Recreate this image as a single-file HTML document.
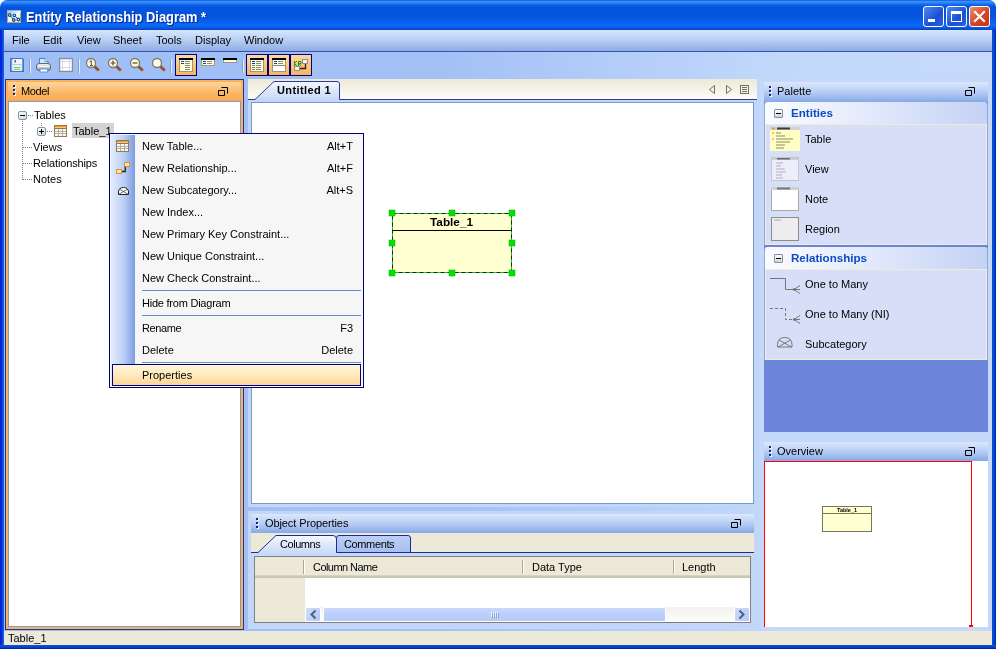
<!DOCTYPE html>
<html><head><meta charset="utf-8"><title>Entity Relationship Diagram</title>
<style>
html,body{margin:0;padding:0;}
body{width:996px;height:649px;overflow:hidden;position:relative;background:linear-gradient(90deg,#9ebef5 0,#a4c1f6 45%,#c2d8fb 78%,#c5dafb 100%);font-family:"Liberation Sans",sans-serif;font-size:11px;color:#000;}
.a{position:absolute;}
.t{position:absolute;white-space:nowrap;line-height:13px;}
svg{position:absolute;overflow:visible;}
#title{left:0;top:0;width:996px;height:30px;background:linear-gradient(#0a58e0 0,#3a90fc 1.500px,#2a82f6 3px,#0c62ea 5px,#0455de 7px,#0454dc 16px,#0860ee 22px,#0a68f8 25px,#0a60ec 27px,#0a52d6 28.500px,#0840bc 30px);border-radius:7px 7px 0 0;}
#title .tt{left:26px;top:9px;font-size:14.5px;font-weight:bold;color:#fff;line-height:16px;text-shadow:1px 1px 0 #0a2a8a;transform:scaleX(0.887);transform-origin:0 0;}
#bl{left:0;top:30px;width:4px;height:619px;background:linear-gradient(90deg,#0a1fd3 0,#0a2ad7 50%,#0d5ee8 70%,#0d5ee8 100%);}
#br{left:992px;top:30px;width:4px;height:619px;background:linear-gradient(90deg,#0855dd,#0441c8 60%,#001ea0);}
#bb{left:0;top:645px;width:996px;height:4px;background:linear-gradient(#0855dd,#0441c8 60%,#001ea0);}
#menu{left:4px;top:30px;width:988px;height:21px;background:linear-gradient(#d6e6fc,#b9d0f4 45%,#8dade5);}
#menuline{left:4px;top:51px;width:988px;height:1px;background:#3a4fb0;}
#tool{left:4px;top:52px;width:988px;height:27px;}
#status{left:4px;top:631px;width:988px;height:14px;background:#ece9d8;}
.cb{position:absolute;top:6px;width:21px;height:21px;border-radius:3px;border:1px solid #fff;box-sizing:border-box;}
.tb{position:absolute;top:2px;width:22px;height:22px;box-sizing:border-box;border:1px solid #000080;background:linear-gradient(#fdd9a0,#fbb35c);}
.sep{position:absolute;top:5px;width:1px;height:17px;background:#6a8ccb;border-right:1px solid #e4ecfb;}
/* panels */
.ph{position:absolute;height:20px;background:linear-gradient(#dbe7fc 0,#c6d8f8 30%,#a9c3f1 65%,#86a8e5 100%);}
.grip{position:absolute;width:2px;height:2px;background:#15297c;box-shadow:1px 1px 0 #fff;}

.dot-h{position:absolute;height:1px;background-image:linear-gradient(90deg,#808080 50%,transparent 50%);background-size:2px 1px;}
.dot-v{position:absolute;width:1px;background-image:linear-gradient(#808080 50%,transparent 50%);background-size:1px 2px;}
.pm{position:absolute;width:9px;height:9px;box-sizing:border-box;border:1px solid #7898b5;border-radius:2px;background:linear-gradient(135deg,#fff,#d6d2c4);}
.pm i{position:absolute;left:1px;top:3px;width:5px;height:1px;background:#000;}
.pm b{position:absolute;left:3px;top:1px;width:1px;height:5px;background:#000;}
#cm{left:109px;top:133px;width:255px;height:255px;box-sizing:border-box;border:1px solid #00007a;background:#f6f6f6;}
#cm .strip{position:absolute;left:1px;top:1px;width:24px;height:250px;background:linear-gradient(90deg,#e3ecfc,#b9cdf5 55%,#7c9ce0);}
#cm .mi{position:absolute;left:32px;white-space:nowrap;line-height:13px;}
#cm .sc{position:absolute;right:10px;white-space:nowrap;line-height:13px;text-align:right;}
#cm .ms{position:absolute;left:32px;width:219px;height:1px;background:#6a8ccb;}

.sec{position:absolute;left:764px;width:224px;box-sizing:border-box;border-left:1px solid #a9c0ee;border-right:1px solid #a9c0ee;}
.sech{position:absolute;left:764px;width:224px;height:22px;border-radius:3px 3px 0 0;background:linear-gradient(90deg,#fbfcff,#e6ecfc 40%,#c4d2f4);box-sizing:border-box;border-left:1px solid #8fa9dc;border-right:1px solid #8fa9dc;}
.secb{position:absolute;left:765px;width:222px;background:#d6dff7;box-sizing:border-box;border:1px solid #f2ecd4;}
.pm2{position:absolute;width:9px;height:9px;box-sizing:border-box;border:1px solid #7f8fa8;border-radius:1px;background:linear-gradient(#fff,#d8d6cc);}
.pm2 i{position:absolute;left:1px;top:3px;width:5px;height:1px;background:#000;}
.sh{position:absolute;white-space:nowrap;line-height:14px;font-weight:bold;font-size:11.6px;color:#0f4ac4;}
</style></head><body><div id="root" style="position:absolute;left:0;top:0;width:996px;height:649px;will-change:transform;opacity:0.9999">
<div class="a" style="left:0;top:0;width:996px;height:10px;background:#fff"></div><div class="a" id="title"><span class="t tt">Entity Relationship Diagram *</span>
<svg style="left:7px;top:10px" width="16" height="14" viewBox="0 0 16 14"><defs><linearGradient id="ig" x1="0" y1="0" x2="1" y2="0"><stop offset="0" stop-color="#8cc8f8"/><stop offset="1" stop-color="#fff"/></linearGradient></defs><rect x="0.500" y="0.500" width="13" height="12" fill="#eef6fc" stroke="#c4a25a"/><rect x="0" y="0" width="14" height="1" fill="#9ab0d8"/><rect x="0.500" y="1" width="13" height="2" fill="url(#ig)"/><g fill="#fff" stroke="#0a4a8c" stroke-width="1.200"><path d="M3 5.500 L7 10 M7.500 5.500 L11.500 9.500" fill="none" stroke-width="0.900"/><circle cx="2.800" cy="5" r="1.300"/><circle cx="7.300" cy="5.300" r="1.300"/><circle cx="6.800" cy="10" r="1.300"/><circle cx="11.300" cy="9.500" r="1.300"/></g></svg>
<div class="cb" style="left:923px;background:linear-gradient(135deg,#4d8cf5,#1c4fd2 60%,#2a62e0)"><div class="a" style="left:4px;top:12px;width:7px;height:3px;background:#fff"></div></div>
<div class="cb" style="left:946px;background:linear-gradient(135deg,#4d8cf5,#1c4fd2 60%,#2a62e0)"><div class="a" style="left:4px;top:4px;width:11px;height:11px;box-sizing:border-box;border:1px solid #fff;border-top-width:3px"></div></div>
<div class="cb" style="left:969px;background:linear-gradient(135deg,#ee8f6e,#d64422 55%,#c93514)"><svg style="left:0;top:0" width="19" height="19" viewBox="0 0 19 19"><path d="M5 5 L14 14 M14 5 L5 14" stroke="#fff" stroke-width="2.2" stroke-linecap="square"/></svg></div>
</div>
<div class="a" id="menu">
<span class="t" style="left:8px;top:4px">File</span>
<span class="t" style="left:39px;top:4px">Edit</span>
<span class="t" style="left:73px;top:4px">View</span>
<span class="t" style="left:109px;top:4px">Sheet</span>
<span class="t" style="left:152px;top:4px">Tools</span>
<span class="t" style="left:191px;top:4px">Display</span>
<span class="t" style="left:240px;top:4px">Window</span>
</div>
<div class="a" id="menuline"></div>
<div class="a" id="tool">

<svg style="left:0;top:0" width="320" height="27" viewBox="4 52 320 27">
<defs><linearGradient id="og" x1="0" y1="0" x2="0" y2="1"><stop offset="0" stop-color="#fedaa2"/><stop offset="1" stop-color="#fbb25a"/></linearGradient>
<g id="mag"><path d="M3.500 3.500 L7.800 7.600" stroke="#9a4e2c" stroke-width="2.800" stroke-linecap="butt"/><circle cx="0" cy="0" r="4.500" fill="#fdfbe8" stroke="#7c786a" stroke-width="1.300"/></g></defs>
<!-- save -->
<defs><linearGradient id="pg" x1="0" y1="0" x2="0" y2="1"><stop offset="0" stop-color="#f4f4f4"/><stop offset="0.5" stop-color="#d0d0d0"/><stop offset="1" stop-color="#8a8a8a"/></linearGradient></defs>
<path d="M10.750 58.750 H22.300 L23.250 59.700 V71.250 H10.750 Z" fill="#b9d0f6" stroke="#3f72d0" stroke-width="1.500"/><rect x="12.500" y="59" width="9.500" height="5" fill="#f2f4f8"/><rect x="14.500" y="60" width="1.500" height="2.500" fill="#55657a"/><rect x="12.500" y="65.500" width="9" height="5.500" fill="#fff"/><rect x="13.500" y="67" width="7" height="1.200" fill="#76be46"/><rect x="13.500" y="69" width="7" height="1.200" fill="#8aca5c"/>
<rect x="29" y="59" width="1" height="14" fill="#7f9fd8"/><rect x="30" y="59" width="1" height="14" fill="#e8effc"/>
<!-- printer -->
<path d="M39.500 64.500 V58.500 H45 L48 61.500 V64.500 Z" fill="#d4e6fc" stroke="#3f86dc"/><path d="M45 58.500 V61.500 H48" fill="#fff" stroke="#3f86dc" stroke-width="0.800"/>
<rect x="36.500" y="63.500" width="14" height="7" rx="2.500" fill="url(#pg)" stroke="#6a6a6a"/><rect x="38" y="66" width="11" height="1" fill="#fafafa"/>
<rect x="40" y="69" width="7.500" height="3" fill="#fff" stroke="#4a8ada" stroke-width="0.800"/>
<!-- grid -->
<rect x="59.600" y="58.600" width="12.800" height="12.800" fill="#fff" stroke="#8c8c8c" stroke-width="1.300"/><path d="M62.500 59.500 V70.500 M69.500 59.500 V70.500 M60.500 61.500 H71.500 M60.500 67.500 H71.500" stroke="#d2d2ff" stroke-width="1"/>
<rect x="78" y="59" width="1" height="14" fill="#7f9fd8"/><rect x="79" y="59" width="1" height="14" fill="#e8effc"/>
<!-- magnifiers -->
<use href="#mag" x="91" y="63"/><path d="M89.500 62 L91.300 60.500 V65.500 M89.800 65.500 H92.800" fill="none" stroke="#5c4e1c" stroke-width="1"/>
<use href="#mag" x="113" y="63"/><path d="M110.500 63 H115.500 M113 60.500 V65.500" stroke="#5c4e1c" stroke-width="1.200"/>
<use href="#mag" x="135" y="63"/><path d="M132.500 63 H137.500" stroke="#5c4e1c" stroke-width="1.200"/>
<use href="#mag" x="157" y="63"/>
<rect x="170" y="59" width="1" height="14" fill="#7f9fd8"/><rect x="171" y="59" width="1" height="14" fill="#e8effc"/>
<!-- toggled 1 -->
<rect x="175.500" y="54.500" width="21" height="21" fill="url(#og)" stroke="#000080"/>
<rect x="179.500" y="58.500" width="13" height="13" fill="#ffffd8" stroke="#9a9684"/><rect x="179" y="58" width="14" height="2" fill="#000"/><g fill="#1a3ab0"><rect x="181" y="61" width="3" height="1"/><rect x="181" y="63" width="3" height="1"/></g><g fill="#8a8a80"><rect x="185" y="61" width="5" height="1"/><rect x="185" y="63" width="5" height="1"/><rect x="185" y="65" width="5" height="1"/><rect x="185" y="67" width="5" height="1"/><rect x="185" y="69" width="5" height="1"/></g>
<!-- icon 2 -->
<rect x="201.500" y="58.500" width="13" height="7" fill="#ffffd8" stroke="#9a9684"/><rect x="201" y="58" width="14" height="2" fill="#000"/><g fill="#1a3ab0"><rect x="203" y="61" width="3" height="1"/><rect x="203" y="63" width="3" height="1"/></g><g fill="#8a8a80"><rect x="207" y="61" width="5" height="1"/><rect x="207" y="63" width="5" height="1"/></g>
<!-- icon 3 -->
<rect x="223.500" y="58.500" width="13" height="4" fill="#ffffd8" stroke="#9a9684"/><rect x="223" y="58" width="14" height="2" fill="#000"/>
<rect x="242" y="59" width="1" height="14" fill="#7f9fd8"/><rect x="243" y="59" width="1" height="14" fill="#e8effc"/>
<!-- toggled group -->
<rect x="246.500" y="54.500" width="21" height="21" fill="url(#og)" stroke="#000080"/>
<rect x="268.500" y="54.500" width="21" height="21" fill="url(#og)" stroke="#000080"/>
<rect x="290.500" y="54.500" width="21" height="21" fill="url(#og)" stroke="#000080"/>
<rect x="250.500" y="58.500" width="13" height="13" fill="#ffffd8" stroke="#9a9684"/><rect x="250" y="58" width="14" height="2" fill="#000"/><g fill="#1a3ab0"><rect x="252" y="61" width="3" height="1"/><rect x="252" y="63" width="3" height="1"/></g><g fill="#8a8a80"><rect x="256" y="61" width="5" height="1"/><rect x="256" y="63" width="5" height="1"/><rect x="252" y="65" width="3" height="1"/><rect x="256" y="65" width="5" height="1"/><rect x="252" y="67" width="3" height="1"/><rect x="256" y="67" width="5" height="1"/><rect x="252" y="69" width="3" height="1"/><rect x="256" y="69" width="5" height="1"/></g>
<rect x="272.500" y="58.500" width="13" height="13" fill="#fff" stroke="#9a9684"/><rect x="273" y="60" width="12" height="5" fill="#ffffd8"/><rect x="272" y="58" width="14" height="2" fill="#000"/><g fill="#1a3ab0"><rect x="274" y="61" width="3" height="1"/><rect x="274" y="63" width="3" height="1"/></g><g fill="#8a8a80"><rect x="278" y="61" width="5" height="1"/><rect x="278" y="63" width="5" height="1"/><rect x="273" y="65" width="12" height="1"/></g>
<path d="M300 68.500 H305.500 V63.500" fill="none" stroke="#222" stroke-width="1.300"/><rect x="302.500" y="59.500" width="5" height="4" fill="#f4f4f4" stroke="#909090"/><rect x="294.500" y="66.500" width="5" height="4" fill="#f4f4f4" stroke="#909090"/><path d="M294.500 61 V66 M294.500 63.500 L297 61 M294.500 63.500 L297 66 M298.500 61 V66 M298.500 61.500 H301 V63.500 H298.500 L301.500 66" fill="none" stroke="#1e9a1e" stroke-width="1"/>
</svg>

</div>

<!-- MODEL PANEL -->
<div class="a" style="left:5px;top:79px;width:239px;height:551px;background:#23329a"></div>
<div class="a" style="left:6px;top:80px;width:237px;height:549px;background:#fbb05a"></div>
<div class="a" style="left:8px;top:82px;width:233px;height:19px;background:linear-gradient(#fed69c,#fbb562 60%,#faa850)"></div>
<div class="grip" style="left:13px;top:85px"></div><div class="grip" style="left:13px;top:89px"></div><div class="grip" style="left:13px;top:93px"></div>
<span class="t" style="left:21px;top:85px;letter-spacing:-0.4px">Model</span>
<svg style="left:218px;top:87px" width="10" height="9" viewBox="0 0 10 9"><path d="M3.5 0.5 H9.5 V6.5 M0.5 3.5 H6.5 V8.5 H0.5 Z" fill="none" stroke="#000" stroke-width="1"/></svg>
<div class="a" style="left:8px;top:101px;width:233px;height:526px;box-sizing:border-box;border:1px solid #7f9db9;background:#fff"></div>

<div class="dot-v" style="left:22px;top:121px;height:59px"></div>
<div class="dot-h" style="left:28px;top:115px;width:5px"></div>
<div class="dot-h" style="left:23px;top:147px;width:9px"></div>
<div class="dot-h" style="left:23px;top:163px;width:9px"></div>
<div class="dot-h" style="left:23px;top:179px;width:9px"></div>
<div class="dot-v" style="left:41px;top:123px;height:4px"></div>
<div class="dot-h" style="left:47px;top:131px;width:5px"></div>
<div class="pm" style="left:18px;top:111px"><i></i></div>
<div class="pm" style="left:37px;top:127px"><i></i><b></b></div>
<span class="t" style="left:34px;top:109px">Tables</span>
<svg style="left:54px;top:125px" width="13" height="12" viewBox="0 0 13 12"><rect x="0.5" y="0.5" width="12" height="11" fill="#f4f8fb" stroke="#9a7a4a"/><rect x="1" y="1" width="11" height="1" fill="#ee9a28"/><rect x="1" y="2" width="11" height="1" fill="#fbc774"/><path d="M1 3.500 H12 M1 6.500 H12 M1 8.500 H12 M4.500 3 V11 M8.500 3 V11" stroke="#b9b09a" stroke-width="1"/><path d="M1 3.500 H12" stroke="#8a7a5a" stroke-width="1"/></svg>
<div class="a" style="left:72px;top:123px;width:42px;height:15px;background:#d3d3d3"></div>
<span class="t" style="left:73px;top:125px">Table_1</span>
<span class="t" style="left:33px;top:141px">Views</span>
<span class="t" style="left:33px;top:157px;letter-spacing:-0.15px">Relationships</span>
<span class="t" style="left:33px;top:173px">Notes</span>


<!-- CENTER -->
<div class="a" style="left:248px;top:79px;width:509px;height:428px;background:#c2d6f9"></div>
<div class="a" style="left:248px;top:511px;width:509px;height:118px;background:#c2d6f9"></div>
<div class="a" style="left:760px;top:79px;width:232px;height:356px;background:#c5d8fa"></div>
<div class="a" style="left:760px;top:439px;width:232px;height:190px;background:#c5d8fa"></div>
<div class="a" style="left:248px;top:79px;width:509px;height:21px;background:linear-gradient(#ece9d8,#f3f1e6 40%,#fdfcf9)"></div>
<svg style="left:248px;top:80px" width="509" height="21" viewBox="0 0 509 21"><defs><linearGradient id="tg" x1="0" y1="0" x2="0" y2="1"><stop offset="0" stop-color="#f4f7fe"/><stop offset="1" stop-color="#c2d5f9"/></linearGradient></defs><path d="M0 19.5 H7 L26 1.5 H89 Q91.5 1.5 91.5 4 V19.5 H509 V21 H0 Z" fill="url(#tg)"/><path d="M0 19.5 H7 L26 1.5 H89 Q91.5 1.5 91.5 4 V19.5 H509" fill="none" stroke="#2a3aa0" stroke-width="1"/><g fill="none" stroke="#77705a" stroke-width="1"><path d="M466.500 5.500 V13.500 L461.500 9.500 Z"/><path d="M478.500 5.500 V13.500 L483.500 9.500 Z"/><rect x="492.500" y="5.500" width="8" height="8"/><path d="M494 7.500 H499 M494 9.500 H499 M494 11.500 H499"/></g></svg>
<span class="t" style="left:277px;top:84px;font-weight:bold;letter-spacing:0.4px">Untitled 1</span>
<div class="a" style="left:251px;top:102px;width:503px;height:402px;box-sizing:border-box;border:1px solid #7b9ac0;background:#fff"></div>

<svg style="left:385px;top:205px" width="135" height="75" viewBox="385 205 135 75">
<rect x="392.500" y="213.500" width="119" height="59" fill="#ffffd2" stroke="#00e000"/>
<rect x="392.500" y="213.500" width="119" height="59" fill="none" stroke="#222" stroke-dasharray="4 3"/>
<path d="M393 230.500 H512" stroke="#000"/>
<g fill="#00e400" stroke="#00b000" stroke-width="0.500"><rect x="389" y="210" width="6" height="6"/><rect x="449" y="210" width="6" height="6"/><rect x="509" y="210" width="6" height="6"/><rect x="389" y="240" width="6" height="6"/><rect x="509" y="240" width="6" height="6"/><rect x="389" y="270" width="6" height="6"/><rect x="449" y="270" width="6" height="6"/><rect x="509" y="270" width="6" height="6"/></g>
</svg>
<span class="t" style="left:430px;top:216px;font-weight:bold;font-size:11.8px">Table_1</span>


<!-- OBJECT PROPERTIES -->

<div class="ph" style="left:251px;top:514px;width:503px;height:19px"></div>
<div class="grip" style="left:256px;top:518px"></div><div class="grip" style="left:256px;top:522px"></div><div class="grip" style="left:256px;top:526px"></div>
<span class="t" style="left:265px;top:517px;letter-spacing:-0.1px">Object Properties</span>
<svg style="left:731px;top:519px" width="10" height="9" viewBox="0 0 10 9"><path d="M3.5 0.5 H9.5 V6.5 M0.5 3.5 H6.5 V8.5 H0.5 Z" fill="none" stroke="#000" stroke-width="1"/></svg>
<div class="a" style="left:251px;top:533px;width:503px;height:20px;background:#ece9d8"></div>
<svg style="left:251px;top:533px" width="503" height="24" viewBox="0 0 503 24">
<defs><linearGradient id="tg2" x1="0" y1="0" x2="0" y2="1"><stop offset="0" stop-color="#f7f9fe"/><stop offset="1" stop-color="#c6d7f8"/></linearGradient>
<linearGradient id="tg3" x1="0" y1="0" x2="0" y2="1"><stop offset="0" stop-color="#bccff6"/><stop offset="1" stop-color="#a6bff0"/></linearGradient></defs>
<rect x="0" y="20" width="503" height="4" fill="#c6d7f8"/>
<path d="M85.500 20 V5 Q85.500 2.500 88 2.500 H157 Q159.500 2.500 159.500 5 V20 Z" fill="url(#tg3)" stroke="#1a2a9a"/>
<path d="M0 19.500 H7 L25 2.500 H82 Q85.500 2.500 85.500 6 V19.500 H503 V21 H0 Z" fill="url(#tg2)"/>
<path d="M0 19.500 H7 L25 2.500 H82 Q85.500 2.500 85.500 6 V19.500 H503" fill="none" stroke="#1a2a9a"/>
</svg>
<span class="t" style="left:280px;top:538px;letter-spacing:-0.45px">Columns</span>
<span class="t" style="left:344px;top:538px;letter-spacing:-0.37px">Comments</span>
<div class="a" style="left:254px;top:556px;width:497px;height:67px;box-sizing:border-box;border:1px solid #808080;background:#ece9d8"></div>
<div class="a" style="left:255px;top:575px;width:495px;height:3px;background:linear-gradient(#ddd8c4,#cfc9b3,#c5bfa8)"></div>
<div class="a" style="left:305px;top:578px;width:445px;height:29px;background:#fff"></div>
<div class="a" style="left:303px;top:560px;width:1px;height:14px;background:#aca899;border-right:1px solid #fff"></div>
<div class="a" style="left:522px;top:560px;width:1px;height:14px;background:#aca899;border-right:1px solid #fff"></div>
<div class="a" style="left:673px;top:560px;width:1px;height:14px;background:#aca899;border-right:1px solid #fff"></div>
<span class="t" style="left:313px;top:561px;letter-spacing:-0.55px">Column Name</span>
<span class="t" style="left:532px;top:561px">Data Type</span>
<span class="t" style="left:682px;top:561px">Length</span>
<div class="a" style="left:305px;top:607px;width:445px;height:15px;background:linear-gradient(#f3f2ec,#fefefb)"></div>
<div class="a" style="left:305px;top:607px;width:16px;height:15px;box-sizing:border-box;border:1px solid #fff;border-radius:2px;background:linear-gradient(135deg,#cddcfb,#b4c9f5)"></div>
<div class="a" style="left:734px;top:607px;width:16px;height:15px;box-sizing:border-box;border:1px solid #fff;border-radius:2px;background:linear-gradient(135deg,#cddcfb,#b4c9f5)"></div>
<div class="a" style="left:323px;top:607px;width:343px;height:15px;box-sizing:border-box;border:1px solid #fff;border-radius:2px;background:linear-gradient(#c9d8fb,#bccefa 50%,#b7caf7)"></div>
<svg style="left:305px;top:607px" width="445" height="15" viewBox="0 0 445 15"><path d="M10.500 3.500 L6.500 7.500 L10.500 11.500" fill="none" stroke="#4d6185" stroke-width="2"/><path d="M434.500 3.500 L438.500 7.500 L434.500 11.500" fill="none" stroke="#4d6185" stroke-width="2"/><path d="M186.500 5 V10 M188.500 5 V10 M190.500 5 V10 M192.500 5 V10" stroke="#eef4fe" stroke-width="1"/><path d="M187.500 6 V11 M189.500 6 V11 M191.500 6 V11 M193.500 6 V11" stroke="#8ca0d8" stroke-width="1"/></svg>

<!-- PALETTE -->

<div class="ph" style="left:764px;top:82px;width:224px"></div>
<div class="grip" style="left:769px;top:86px"></div><div class="grip" style="left:769px;top:90px"></div><div class="grip" style="left:769px;top:94px"></div>
<span class="t" style="left:777px;top:85px">Palette</span>
<svg style="left:965px;top:87px" width="10" height="9" viewBox="0 0 10 9"><path d="M3.5 0.5 H9.5 V6.5 M0.5 3.5 H6.5 V8.5 H0.5 Z" fill="none" stroke="#000" stroke-width="1"/></svg>
<div class="a" style="left:764px;top:102px;width:224px;height:330px;background:#6a85da"></div>
<div class="a" style="left:764px;top:105px;width:224px;height:140px;box-sizing:border-box;border-left:1px solid #8fa9dc;border-right:1px solid #8fa9dc;background:#d6dff7"></div>
<div class="a" style="left:764px;top:250px;width:224px;height:110px;box-sizing:border-box;border-left:1px solid #8fa9dc;border-right:1px solid #8fa9dc;background:#d6dff7"></div>
<div class="sech" style="top:102px"></div>
<div class="pm2" style="left:774px;top:109px"><i></i></div>
<span class="sh" style="left:791px;top:106px">Entities</span>
<div class="secb" style="top:124px;height:121px"></div>
<!-- thumbs -->
<svg style="left:770px;top:127px" width="30" height="114" viewBox="0 0 30 114">
<rect x="0" y="0" width="30" height="24" fill="#ffffc4"/><rect x="0" y="0" width="30" height="3" fill="#d2d2d2"/><rect x="7" y="0.500" width="13" height="2" fill="#3a3a3a"/><rect x="2" y="0.500" width="3" height="2" fill="#e89a30"/>
<g fill="#8d8a60"><rect x="6" y="5.500" width="5" height="1"/><rect x="6" y="8.500" width="9" height="1"/><rect x="6" y="11.500" width="17" height="1"/><rect x="6" y="14.500" width="14" height="1"/><rect x="6" y="17.500" width="9" height="1"/><rect x="6" y="20.500" width="8" height="1"/></g><rect x="2" y="5.500" width="2" height="1" fill="#e08a20"/><rect x="2" y="11.500" width="2" height="1" fill="#e08a20"/>
<rect x="1" y="30" width="28" height="24" fill="#eeeefb"/><rect x="1" y="30" width="28" height="3" fill="#cfcfcf"/><rect x="7" y="30.500" width="13" height="2" fill="#6a6a6a"/><rect x="1.500" y="30.500" width="27" height="23" fill="none" stroke="#c4c4d4"/>
<g fill="#aeaec0"><rect x="6" y="35.500" width="7" height="1"/><rect x="6" y="38.500" width="5" height="1"/><rect x="6" y="41.500" width="9" height="1"/><rect x="6" y="44.500" width="10" height="1"/><rect x="6" y="47.500" width="6" height="1"/><rect x="6" y="50.500" width="7" height="1"/></g>
<rect x="1.500" y="60.500" width="27" height="23" fill="#fff" stroke="#a8a8a8"/><rect x="1" y="60" width="28" height="3" fill="#cfcfcf"/><rect x="7" y="60.500" width="13" height="2" fill="#777"/>
<rect x="1.500" y="90.500" width="27" height="23" fill="#ededed" stroke="#8c8c8c"/><rect x="4" y="92.500" width="7" height="1" fill="#a8a8a8"/>
</svg>
<span class="t" style="left:805px;top:133px">Table</span>
<span class="t" style="left:805px;top:163px">View</span>
<span class="t" style="left:805px;top:193px">Note</span>
<span class="t" style="left:805px;top:223px">Region</span>

<div class="sech" style="top:247px"></div>
<div class="pm2" style="left:774px;top:254px"><i></i></div>
<span class="sh" style="left:791px;top:251px">Relationships</span>
<div class="secb" style="top:269px;height:91px"></div>
<svg style="left:769px;top:275px" width="32" height="80" viewBox="0 0 32 80">
<path d="M1 3.500 H16.500 V14.500 H31 M25 14.500 L31 10.500 M25 14.500 L31 18.500" fill="none" stroke="#777" stroke-width="1"/><rect x="24" y="13.500" width="2" height="2" fill="#666"/>
<path d="M1 33.500 H16.500 V44.500 H25" fill="none" stroke="#777" stroke-width="1" stroke-dasharray="3 2"/><path d="M25 44.500 H31 M25 44.500 L31 40.500 M25 44.500 L31 48.500" fill="none" stroke="#777" stroke-width="1"/><rect x="24" y="43.500" width="2" height="2" fill="#666"/>
<path d="M8.500 72 V69.500 Q8.800 62.500 15.800 62.500 Q22.800 62.500 23 69.500 V72 Z M10 65 L22.500 72 M21.500 65 L9 72" fill="none" stroke="#777" stroke-width="1"/>
</svg>
<span class="t" style="left:805px;top:278px">One to Many</span>
<span class="t" style="left:805px;top:308px">One to Many (NI)</span>
<span class="t" style="left:805px;top:338px">Subcategory</span>


<!-- OVERVIEW -->

<div class="ph" style="left:764px;top:442px;width:224px;height:19px"></div>
<div class="grip" style="left:769px;top:446px"></div><div class="grip" style="left:769px;top:450px"></div><div class="grip" style="left:769px;top:454px"></div>
<span class="t" style="left:777px;top:445px">Overview</span>
<svg style="left:965px;top:447px" width="10" height="9" viewBox="0 0 10 9"><path d="M3.5 0.5 H9.5 V6.5 M0.5 3.5 H6.5 V8.5 H0.5 Z" fill="none" stroke="#000" stroke-width="1"/></svg>
<div class="a" style="left:764px;top:461px;width:224px;height:166px;background:#fff"></div>
<div class="a" style="left:764px;top:461px;width:208px;height:166px;box-sizing:border-box;border:1px solid #f00;border-bottom:none"></div>
<div class="a" style="left:969px;top:625px;width:4px;height:2px;background:#f00"></div>
<div class="a" style="left:822px;top:506px;width:50px;height:26px;box-sizing:border-box;border:1px solid #77775a;background:#ffffd2"></div>
<div class="a" style="left:822px;top:513px;width:50px;height:1px;background:#77775a"></div>
<span class="t" style="left:822px;top:507px;width:50px;text-align:center;font-size:5.500px;line-height:6px;font-weight:bold">Table_1</span>


<div class="a" id="cm"><div class="strip"></div>
<div class="a" style="left:2px;top:230px;width:249px;height:22px;box-sizing:border-box;border:1px solid #00007a;background:linear-gradient(#fff6d6,#ffe9bd 50%,#ffd596)"></div>
<span class="mi" style="top:6px">New Table...</span><span class="sc" style="top:6px">Alt+T</span>
<span class="mi" style="top:28px">New Relationship...</span><span class="sc" style="top:28px">Alt+F</span>
<span class="mi" style="top:50px">New Subcategory...</span><span class="sc" style="top:50px">Alt+S</span>
<span class="mi" style="top:72px">New Index...</span>
<span class="mi" style="top:94px">New Primary Key Constraint...</span>
<span class="mi" style="top:116px">New Unique Constraint...</span>
<span class="mi" style="top:138px">New Check Constraint...</span>
<span class="mi" style="top:163px;letter-spacing:-0.23px">Hide from Diagram</span>
<span class="mi" style="top:188px;letter-spacing:-0.4px">Rename</span><span class="sc" style="top:188px">F3</span>
<span class="mi" style="top:210px">Delete</span><span class="sc" style="top:210px">Delete</span>
<span class="mi" style="top:235px">Properties</span>
<div class="ms" style="top:156px"></div>
<div class="ms" style="top:181px"></div>
<div class="ms" style="top:228px"></div>
<svg style="left:6px;top:6px" width="13" height="12" viewBox="0 0 13 12"><rect x="0.5" y="0.5" width="12" height="11" fill="#f4f8fb" stroke="#9a7a4a"/><rect x="1" y="1" width="11" height="1" fill="#ee9a28"/><rect x="1" y="2" width="11" height="1" fill="#fbc774"/><path d="M1 3.500 H12 M1 6.500 H12 M1 8.500 H12 M4.500 3 V11 M8.500 3 V11" stroke="#b9b09a" stroke-width="1"/><path d="M1 3.500 H12" stroke="#8a7a5a" stroke-width="1"/></svg><svg style="left:6px;top:28px" width="15" height="13" viewBox="0 0 15 13"><path d="M5 9.500 H9.300 V4" fill="none" stroke="#2a2a2a" stroke-width="1.500"/><rect x="0.500" y="7.500" width="5" height="4" fill="#ffe9a8" stroke="#e09030"/><rect x="8.500" y="0.500" width="5" height="4" fill="#ffe9a8" stroke="#e09030"/></svg>
<svg style="left:8px;top:53px" width="11" height="8" viewBox="0 0 11 8"><path d="M0.500 7.500 V5 Q0.800 0.500 5.500 0.500 Q10.200 0.500 10.500 5 V7.500 Z" fill="#fff" stroke="#222" stroke-width="1"/><path d="M2 2.500 L10 7.200 M9 2.500 L1 7.200" fill="none" stroke="#444" stroke-width="0.800"/></svg>
</div>
<div class="a" id="status"><span class="t" style="left:4px;top:1px">Table_1</span></div>
<div class="a" id="bl"></div><div class="a" id="br"></div><div class="a" id="bb"></div>
</div></body></html>
